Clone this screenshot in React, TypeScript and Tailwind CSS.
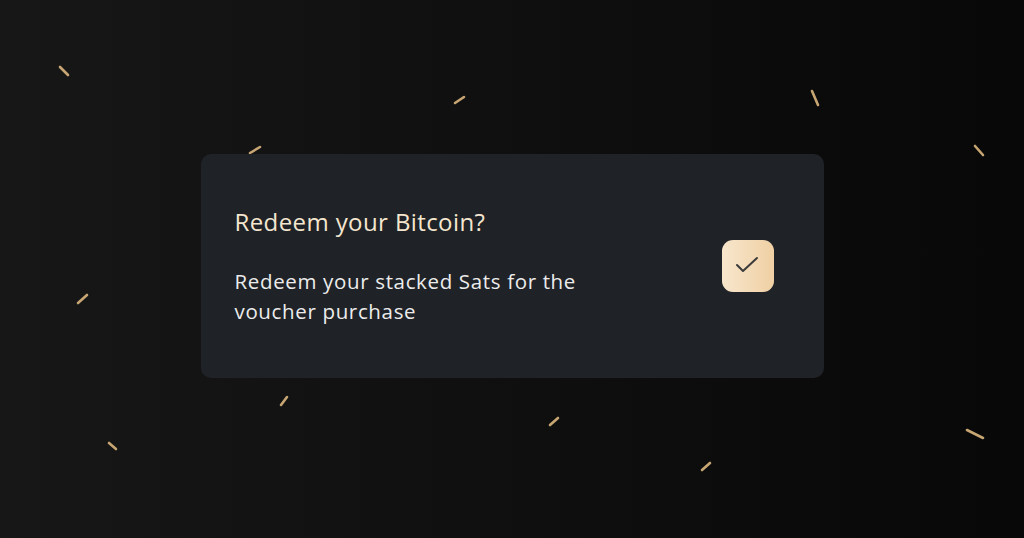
import React from "react";

const confetti: [number, number, number, number][] = [
  [60, 67, 68, 75],
  [250, 153, 260, 147],
  [455, 103, 464, 97],
  [812, 91, 818, 105],
  [975, 146, 983, 155],
  [78, 303, 87, 295],
  [281, 405, 287, 397],
  [109, 443, 116, 449],
  [550, 425, 558, 418],
  [702, 470, 710, 463],
  [967, 430, 983, 438],
];

export default function App() {
  return (
    <div
      className="relative w-[1024px] h-[538px] overflow-hidden bg-gradient-to-r from-[#171717] to-[#080808] flex justify-center pt-[154px]"
      style={{ fontFamily: '"Open Sans", "Noto Sans", sans-serif' }}
    >
      <div className="relative z-10 w-[623px] h-[224px] rounded-[10px] bg-[#1f2226] flex items-center pl-[34px] pr-[50px]">
        <div className="flex-1 flex flex-col">
          <h1 className="text-[24px] leading-[32px] font-medium text-[#f4e6cf] tracking-[0.4px]">
            Redeem your Bitcoin?
          </h1>
          <p className="mt-[28px] text-[20.5px] leading-[30px] text-[#ececec] w-[380px] tracking-[0.65px]">
            Redeem your stacked Sats for the voucher purchase
          </p>
        </div>
        <div className="w-[52px] h-[52px] rounded-[11px] bg-gradient-to-r from-[#f7e6cc] to-[#f0d0a4]">
          <svg width="52" height="52" viewBox="0 0 52 52" fill="none">
            <path
              d="M15 25 L21 31 L35 18"
              stroke="#3b3b3b"
              strokeWidth="2"
              strokeLinecap="round"
              strokeLinejoin="round"
            />
          </svg>
        </div>
      </div>
      <svg className="absolute inset-0 pointer-events-none" width="1024" height="538">
        {confetti.map(([x1, y1, x2, y2], i) => (
          <line
            key={i}
            x1={x1}
            y1={y1}
            x2={x2}
            y2={y2}
            stroke="#c7a673"
            strokeWidth="2.6"
            strokeLinecap="round"
          />
        ))}
      </svg>
    </div>
  );
}
